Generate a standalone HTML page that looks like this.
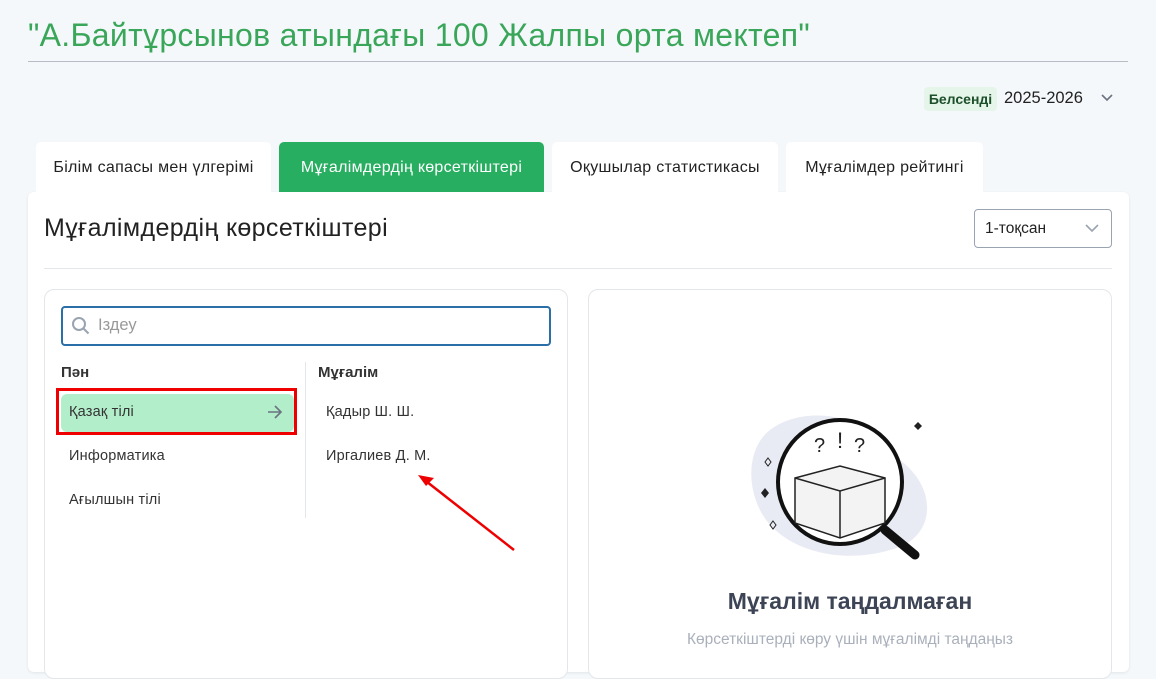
<!DOCTYPE html>
<html><head><meta charset="utf-8"><style>
*{box-sizing:border-box;margin:0;padding:0}
body{width:1156px;height:664px;overflow:hidden;background:#f5f8fb;font-family:"Liberation Sans","DejaVu Sans",sans-serif;position:relative;color:#222}
.a{position:absolute}
.h1{left:28px;top:17px;font-size:32px;letter-spacing:0.3px;color:#3aa65a;white-space:nowrap}
.hr{left:28px;top:61px;width:1100px;height:1px;background:#b8bcc4}
.badge{left:924px;top:87px;width:73px;height:24px;background:#e6f5ea;border-radius:4px;color:#1d4f2b;font-size:14px;font-weight:bold;line-height:24px;text-align:center}
.tab{top:142px;height:50px;background:#fff;border-radius:5px 5px 0 0;font-size:16px;letter-spacing:0.3px;line-height:52px;text-align:center;color:#222;white-space:nowrap}
.card{left:28px;top:192px;width:1101px;height:480px;background:#fff;border-radius:6px;box-shadow:0 1px 3px rgba(0,0,0,.08)}
.sub{border:1px solid #e3e6ea;border-radius:10px;background:#fff}
.it{font-size:14.5px;letter-spacing:0.2px;color:#333}
</style></head><body>
<div class="a h1">"А.Байтұрсынов атындағы 100 Жалпы орта мектеп"</div>
<div class="a hr"></div>
<div class="a badge">Белсенді</div>
<div class="a" style="left:1004px;top:89px;font-size:16.5px;color:#222">2025-2026</div>
<svg class="a" style="left:1100px;top:93px" width="14" height="10"><path d="M2 2l5 5 5-5" stroke="#6b7280" stroke-width="1.6" fill="none"/></svg>
<div class="a card"></div>
<div class="a tab" style="left:36px;width:235px">Білім сапасы мен үлгерімі</div>
<div class="a tab" style="left:279px;width:265px;background:#27ae60;color:#fff">Мұғалімдердің көрсеткіштері</div>
<div class="a tab" style="left:552px;width:226px">Оқушылар статистикасы</div>
<div class="a tab" style="left:786px;width:197px">Мұғалімдер рейтингі</div>
<div class="a" style="left:44px;top:214px;font-size:25px;letter-spacing:0.4px;color:#222;white-space:nowrap">Мұғалімдердің көрсеткіштері</div>
<div class="a" style="left:974px;top:209px;width:138px;height:39px;border:1px solid #9aa3b0;border-radius:4px;font-size:15.5px;line-height:38px;padding-left:10px">1-тоқсан</div>
<svg class="a" style="left:1084px;top:223px" width="16" height="10"><path d="M2 2l6 6 6-6" stroke="#9aa3b0" stroke-width="1.6" fill="none"/></svg>
<div class="a" style="left:44px;top:268px;width:1068px;height:1px;background:#e3e6ea"></div>
<div class="a sub" style="left:44px;top:289px;width:524px;height:390px"></div>
<div class="a sub" style="left:588px;top:289px;width:524px;height:390px"></div>
<div class="a" style="left:61px;top:306px;width:490px;height:40px;border:2px solid #2a6fa8;border-radius:4px"></div>
<svg class="a" style="left:71px;top:316px" width="20" height="20"><circle cx="8" cy="8" r="6" stroke="#9aa3b0" stroke-width="2" fill="none"/><path d="M12.5 12.5l5 5" stroke="#9aa3b0" stroke-width="2"/></svg>
<div class="a" style="left:98px;top:316px;font-size:16.5px;color:#999">Іздеу</div>
<div class="a" style="left:61px;top:364px;font-size:15px;font-weight:bold;color:#333">Пән</div>
<div class="a" style="left:318px;top:364px;font-size:15px;font-weight:bold;color:#333">Мұғалім</div>
<div class="a" style="left:305px;top:362px;width:1px;height:156px;background:#e3e6ea"></div>
<div class="a" style="left:61px;top:394px;width:233px;height:38px;background:#b3eecb;border-radius:6px"></div>
<div class="a" style="left:56px;top:388px;width:241px;height:47px;border:3px solid #e00;"></div>
<div class="a it" style="left:69px;top:404px">Қазақ тілі</div>
<svg class="a" style="left:266px;top:404px" width="18" height="16"><path d="M2 8h13M9 2l6 6-6 6" stroke="#6b7280" stroke-width="1.6" fill="none"/></svg>
<div class="a it" style="left:69px;top:448px">Информатика</div>
<div class="a it" style="left:69px;top:492px">Ағылшын тілі</div>
<div class="a it" style="left:326px;top:404px">Қадыр Ш. Ш.</div>
<div class="a it" style="left:326px;top:448px">Иргалиев Д. М.</div>
<svg class="a" style="left:410px;top:470px" width="110" height="86"><path d="M104 80L12 8" stroke="#e00" stroke-width="2.5"/><path d="M8 5l16 3-8 8z" fill="#e00"/></svg>
<svg class="a" style="left:740px;top:400px" width="220" height="180">
<path d="M30 30C70 0 140 20 160 60C200 90 195 140 150 150C100 165 40 150 20 110C5 80 10 45 30 30z" fill="#e9ebf4"/>
<line x1="145" y1="130" x2="175" y2="155" stroke="#111" stroke-width="9" stroke-linecap="round"/>
<circle cx="100" cy="82" r="62" fill="#fff" stroke="#111" stroke-width="4"/>
<path d="M55 78l45 -12 45 12v45l-45 15-45-15z" fill="#f3f3f3" stroke="#222" stroke-width="1.5"/>
<path d="M100 91v47M55 78l45 13 45-13" stroke="#222" stroke-width="1.5" fill="none"/>
<text x="74" y="52" font-size="20" fill="#222">?</text><text x="97" y="48" font-size="22" fill="#222">!</text><text x="114" y="52" font-size="20" fill="#222">?</text>
<path d="M178 22l4 4-4 4-4-4z" fill="#222"/><path d="M25 88l4 5-4 5-4-5z" fill="#222"/>
<path d="M28 58l3 4-3 4-3-4z" fill="none" stroke="#222"/><path d="M33 121l3 4-3 4-3-4z" fill="none" stroke="#222"/>
</svg>
<div class="a" style="left:588px;top:588px;width:524px;text-align:center;font-size:23px;font-weight:bold;color:#3d4456">Мұғалім таңдалмаған</div>
<div class="a" style="left:588px;top:631px;width:524px;text-align:center;font-size:15.5px;color:#aab0bb">Көрсеткіштерді көру үшін мұғалімді таңдаңыз</div>
</body></html>
